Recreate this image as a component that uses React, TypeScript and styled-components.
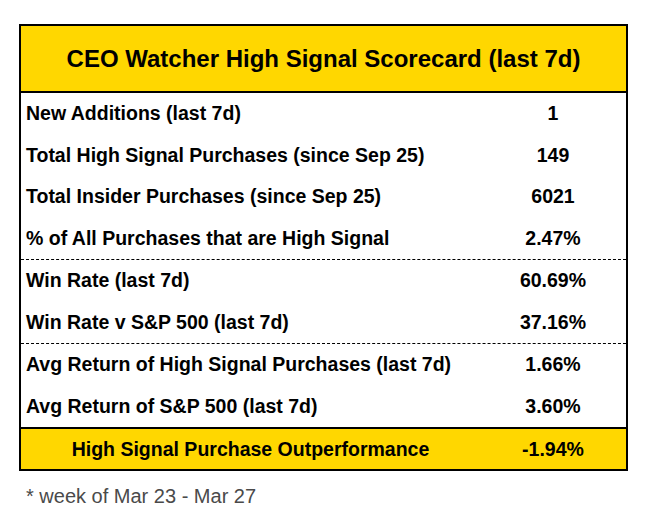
import React from 'react';
import styled, { createGlobalStyle } from 'styled-components';

const GlobalStyle = createGlobalStyle`
  body {
    margin: 0;
    background: #ffffff;
    font-family: "Liberation Sans", Arial, sans-serif;
  }
`;

const Page = styled.div`
  padding: 24px 20px 0 19px;
  width: 648px;
  box-sizing: border-box;
`;

const Card = styled.div`
  width: 609px;
  box-sizing: border-box;
  border: 2px solid #000;
`;

const Header = styled.div`
  height: 65px;
  background: #ffd700;
  border-bottom: 2px solid #000;
  display: flex;
  align-items: center;
  justify-content: center;
  font-size: 24px;
  font-weight: bold;
  color: #000;
`;

const Group = styled.div<{ $divider?: 'dashed' | 'solid' }>`
  border-bottom: ${p =>
    p.$divider === 'dashed' ? '1px dashed #000' : p.$divider === 'solid' ? '2px solid #000' : 'none'};
`;

const Row = styled.div<{ $highlight?: boolean }>`
  display: grid;
  grid-template-columns: 1fr 146px;
  align-items: center;
  height: ${p => (p.$highlight ? '40px' : '41.5px')};
  background: ${p => (p.$highlight ? '#ffd700' : 'transparent')};
  font-size: 19.5px;
  font-weight: bold;
  color: #000;
`;

const Label = styled.div<{ $center?: boolean }>`
  padding-left: ${p => (p.$center ? '0' : '5px')};
  text-align: ${p => (p.$center ? 'center' : 'left')};
  white-space: nowrap;
`;

const Value = styled.div`
  text-align: center;
`;

const Note = styled.div`
  margin-top: 14px;
  padding-left: 7px;
  font-size: 20px;
  color: #4a4a4a;
`;

type Item = { label: string; value: string };

const groups: { items: Item[]; divider: 'dashed' | 'solid' }[] = [
  {
    divider: 'dashed',
    items: [
      { label: 'New Additions (last 7d)', value: '1' },
      { label: 'Total High Signal Purchases (since Sep 25)', value: '149' },
      { label: 'Total Insider Purchases (since Sep 25)', value: '6021' },
      { label: '% of All Purchases that are High Signal', value: '2.47%' },
    ],
  },
  {
    divider: 'dashed',
    items: [
      { label: 'Win Rate (last 7d)', value: '60.69%' },
      { label: 'Win Rate v S&P 500 (last 7d)', value: '37.16%' },
    ],
  },
  {
    divider: 'solid',
    items: [
      { label: 'Avg Return of High Signal Purchases (last 7d)', value: '1.66%' },
      { label: 'Avg Return of S&P 500 (last 7d)', value: '3.60%' },
    ],
  },
];

export default function App() {
  return (
    <Page>
      <GlobalStyle />
      <Card>
        <Header>CEO Watcher High Signal Scorecard (last 7d)</Header>
        {groups.map((g, i) => (
          <Group key={i} $divider={g.divider}>
            {g.items.map(item => (
              <Row key={item.label}>
                <Label>{item.label}</Label>
                <Value>{item.value}</Value>
              </Row>
            ))}
          </Group>
        ))}
        <Row $highlight>
          <Label $center>High Signal Purchase Outperformance</Label>
          <Value>-1.94%</Value>
        </Row>
      </Card>
      <Note>* week of Mar 23 - Mar 27</Note>
    </Page>
  );
}
